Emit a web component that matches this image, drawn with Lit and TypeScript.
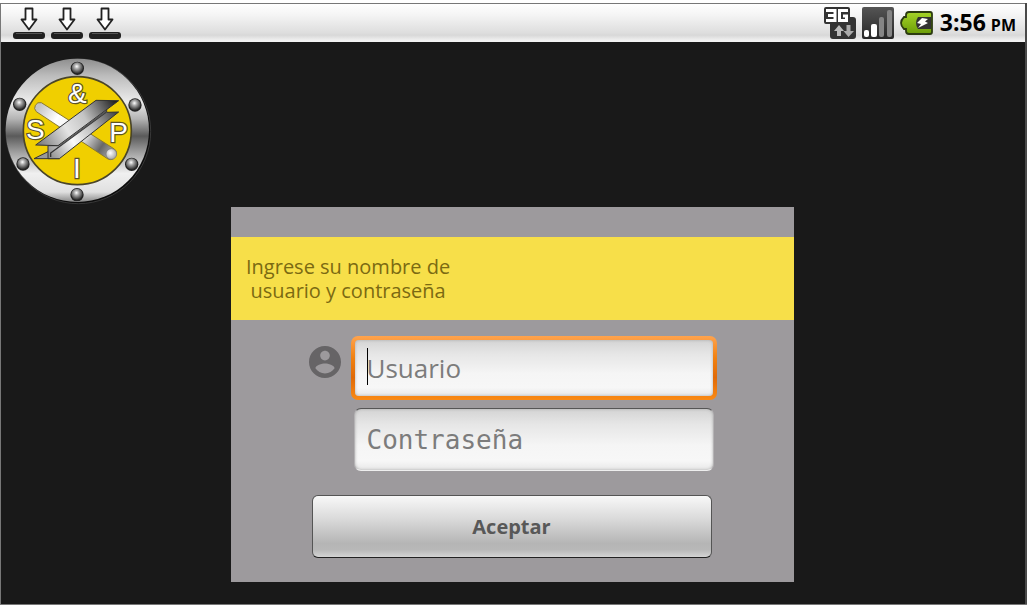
import { LitElement, html, css, svg } from "lit";
import { customElement } from "lit/decorators.js";

const BOLTS = [
  [232, 54],
  [59, 162],
  [405, 164],
  [69, 341],
  [395, 342],
  [231, 433],
];

@customElement("company-logo")
class CompanyLogo extends LitElement {
  static styles = css`
    :host {
      display: block;
      width: 148px;
    }
    svg {
      display: block;
      width: 100%;
    }
    .letter {
      font-family: "Liberation Sans", sans-serif;
      font-size: 84px;
      fill: #fff;
      stroke: #5c5228;
      stroke-width: 7px;
      paint-order: stroke;
      text-anchor: middle;
    }
  `;

  render() {
    return html`
      <svg viewBox="15 20 444 444" role="img" aria-label="S &amp; P I">
        <defs>
          <linearGradient id="ring" x1="0" y1="0" x2="0" y2="1">
            <stop offset="0" stop-color="#8e8e8e" />
            <stop offset="0.12" stop-color="#bcbcbc" />
            <stop offset="0.3" stop-color="#ececec" />
            <stop offset="0.42" stop-color="#b4b4b4" />
            <stop offset="0.54" stop-color="#5a5a5a" />
            <stop offset="0.66" stop-color="#a4a4a4" />
            <stop offset="0.8" stop-color="#f0f0f0" />
            <stop offset="0.93" stop-color="#e0e0e0" />
            <stop offset="1" stop-color="#888" />
          </linearGradient>
          <radialGradient id="bolt" cx="0.45" cy="0.36" r="0.62">
            <stop offset="0" stop-color="#fff" />
            <stop offset="0.35" stop-color="#aaa" />
            <stop offset="1" stop-color="#2c2c2c" />
          </radialGradient>
          <radialGradient id="end" cx="0.4" cy="0.4" r="0.6">
            <stop offset="0" stop-color="#fff" />
            <stop offset="1" stop-color="#aaa" />
          </radialGradient>
          <linearGradient id="rod" gradientUnits="userSpaceOnUse" x1="120" y1="165" x2="330" y2="305">
            <stop offset="0" stop-color="#c4c4c4" />
            <stop offset="0.25" stop-color="#fff" />
            <stop offset="0.65" stop-color="#e4e4e4" />
            <stop offset="0.88" stop-color="#666" />
            <stop offset="1" stop-color="#999" />
          </linearGradient>
          <linearGradient id="face" gradientUnits="userSpaceOnUse" x1="120" y1="280" x2="345" y2="150">
            <stop offset="0" stop-color="#808080" />
            <stop offset="0.35" stop-color="#e4e4e4" />
            <stop offset="0.6" stop-color="#c4c4c4" />
            <stop offset="1" stop-color="#202020" />
          </linearGradient>
          <linearGradient id="side" gradientUnits="userSpaceOnUse" x1="150" y1="325" x2="350" y2="185">
            <stop offset="0" stop-color="#8a8a8a" />
            <stop offset="0.35" stop-color="#fafafa" />
            <stop offset="0.65" stop-color="#bbb" />
            <stop offset="1" stop-color="#404040" />
          </linearGradient>
        </defs>
        <circle cx="235" cy="243" r="217" fill="#0c0c0c" stroke="#4c4c4c" stroke-width="2" />
        <circle cx="232" cy="240" r="215" fill="url(#ring)" />
        <circle cx="232" cy="241" r="162" fill="#f0cf00" stroke="#4a4528" stroke-width="5" />
        ${BOLTS.map(
          ([x, y]) => svg`
            <circle cx=${x} cy=${y} r="20" fill="#222" />
            <circle cx=${x} cy=${y - 1} r="17" fill="url(#bolt)" />`
        )}
        <text class="letter" x="232" y="159">&amp;</text>
        <text class="letter" x="106" y="266">S</text>
        <text class="letter" x="356" y="276">P</text>
        <text class="letter" x="231" y="382">I</text>
        <path d="M124 157 L343 296 A18 18 0 0 1 324 326 L109 184 A16 16 0 0 1 124 157Z"
          fill="url(#rod)" stroke="#8a7a30" stroke-width="3" />
        <circle cx="334" cy="311" r="16" fill="url(#end)" stroke="#777" stroke-width="2" />
        <path d="M102 325 L144 304 L178 325Z"
          fill="#999" stroke="#333" stroke-width="3" stroke-linejoin="round" />
        <path d="M144 286 L174 286 L320 176 L320 186 L356 185 L178 325 L144 325Z"
          fill="url(#side)" stroke="#333" stroke-width="3" stroke-linejoin="round" />
        <path d="M107 284 L288 150 L356 151 L174 286Z"
          fill="url(#face)" stroke="#333" stroke-width="3" stroke-linejoin="round" />
        <path d="M152 320 L152 308 L318 186" fill="none" stroke="#333" stroke-width="4" />
        <path d="M174 288 L320 178 L316 187 L188 282Z" fill="#555" />
      </svg>
    `;
  }
}

@customElement("status-bar")
class StatusBar extends LitElement {
  static styles = css`
    :host {
      display: flex;
      justify-content: space-between;
      align-items: center;
      box-sizing: border-box;
      height: 39px;
      padding: 0 9px 0 12px;
      border-top: 1px solid #777;
      background: linear-gradient(#fff, #f4f4f4 30%, #dedede 75%, #d8d8d8 82%, #f2f2f2 97%);
    }
    svg {
      display: block;
    }
    .group {
      display: flex;
      align-items: center;
      gap: 6px;
    }
    .time {
      display: flex;
      align-items: baseline;
      gap: 5px;
      font: 700 23px/38px "Open Sans", sans-serif;
      color: #000;
      white-space: nowrap;
    }
    .meridiem {
      font-size: 16px;
    }
  `;

  render() {
    return html`
      <div class="group">
        ${[0, 1, 2].map(
          () => html`
            <svg width="32" height="34" viewBox="0 0 32 34" role="img" aria-label="Descarga">
              <path d="M12.5 2.5H19.5V13.5H23.5L16 23.5L8.5 13.5H12.5Z" fill="#fff"
                stroke="#222" stroke-width="1.8" stroke-linejoin="round" />
              <rect x="0" y="26" width="32" height="7" rx="3" fill="#202020" />
              <path d="M3 27.5H29" stroke="#555" />
            </svg>
          `
        )}
      </div>
      <div class="group">
        <svg width="32" height="32" viewBox="0 0 32 32" role="img" aria-label="3G">
          <path d="M2 0H24Q26 0 26 2V10H29Q32 10 32 13V29Q32 32 29 32H9Q6 32 6 29V17H2Q0 17 0 15V2Q0 0 2 0Z" fill="#333" />
          <path d="M2 3.5H11V13.5H2M4 8.5H11" fill="none" stroke="#fff" stroke-width="3" />
          <path d="M24 3.5H15.5V13.5H22.5V9H19" fill="none" stroke="#fff" stroke-width="3" />
          <path d="M15 18L20 24H17V29H13V24H10Z" fill="#bbb" />
          <path d="M24.5 30L30 24H26.5V18H22.5V24H19.5Z" fill="#aaa" />
        </svg>
        <svg width="32" height="32" viewBox="0 0 32 32" role="img" aria-label="Señal">
          <defs>
            <linearGradient id="panel" x1="0" y1="0" x2="0" y2="1">
              <stop offset="0" stop-color="#555" />
              <stop offset="1" stop-color="#262626" />
            </linearGradient>
          </defs>
          <rect width="32" height="32" rx="2" fill="url(#panel)" />
          <rect x="2" y="23" width="5" height="7" rx="2" fill="#fff" />
          <rect x="9" y="17" width="6" height="13" rx="2" fill="#fff" />
          <rect x="17" y="10" width="5" height="20" rx="2" fill="#858585" />
          <rect x="25" y="3" width="5" height="27" rx="2" fill="#858585" />
        </svg>
        <svg width="34" height="24" viewBox="0 0 34 24" role="img" aria-label="Batería">
          <defs>
            <linearGradient id="charge" x1="0" y1="0" x2="0" y2="1">
              <stop offset="0" stop-color="#a5d428" />
              <stop offset="1" stop-color="#6b9c08" />
            </linearGradient>
          </defs>
          <path d="M9 1H30Q32 1 32 3V21Q32 23 30 23H9Q6 23 6 20V18H4Q1 15 1 12Q1 9 4 6H6V4Q6 1 9 1Z"
            fill="url(#charge)" stroke="#2c3b10" stroke-width="1.8" />
          <path d="M18 6H31V18H18Q14 12 18 6Z" fill="#333" />
          <path d="M22 7L28 8L25 10.500L28 12L18 17L21 13L17 12Z" fill="#fff" />
        </svg>
        <div class="time"><span>3:56</span><span class="meridiem">PM</span></div>
      </div>
    `;
  }
}

@customElement("login-card")
class LoginCard extends LitElement {
  static styles = css`
    :host {
      display: block;
      padding: 30px 0 24px;
      background: #9d9a9d;
      font-family: "Open Sans", sans-serif;
    }
    .banner {
      display: flex;
      padding: 18px 15px 17px;
      background: #f7df49;
    }
    .message {
      margin: 0;
      font-size: 20px;
      line-height: 24px;
      text-align: center;
      color: #7b6a12;
    }
    .line {
      display: block;
    }
    .form {
      display: flex;
      flex-direction: column;
      width: 100%;
      max-width: 408px;
      margin: 16px auto 0;
    }
    .row {
      display: grid;
      grid-template-columns: 32px minmax(0, 1fr);
      gap: 10px;
    }
    .avatar {
      display: block;
      margin-top: 10px;
    }
    .fields {
      display: grid;
      gap: 8px;
    }
    .field {
      position: relative;
      border-radius: 7px;
    }
    .focused {
      padding: 4px;
      background: linear-gradient(#ffa34d, #f08010 35%, #e06a08 65%, #fa8a14);
    }
    .plain {
      padding: 0 3px;
    }
    .input {
      display: block;
      box-sizing: border-box;
      width: 100%;
      height: 63px;
      margin: 0;
      padding: 0 12px;
      border: 1px solid #b4b2b4;
      border-top-color: #555;
      border-bottom-color: #eee;
      border-radius: 7px;
      outline: none;
      background: linear-gradient(#d4d4d4, #e6e6e6 25%, #f5f5f5 60%, #f7f7f7 85%, #e8e8e8);
      box-shadow: inset 0 0 3px #aaa;
      font: 26px "Open Sans", sans-serif;
      color: #222;
    }
    .focused .input {
      height: 56px;
      border: 0;
      border-radius: 4px;
      caret-color: transparent;
    }
    .password {
      font-family: "DejaVu Sans Mono", monospace;
    }
    .input::placeholder {
      color: #7c7c7c;
      opacity: 1;
    }
    .caret {
      position: absolute;
      left: 16px;
      top: 12px;
      width: 1px;
      height: 37px;
      background: #000;
    }
    .submit {
      height: 63px;
      margin: 24px 5px 0 3px;
      border: 1px solid #555;
      border-bottom-color: #222;
      border-radius: 6px;
      background: linear-gradient(#f8f8f8, #d8d8d8 40%, #b5b5b5 78%, #b8b8b8 88%, #d4d4d4);
      font: 700 20px "Open Sans", sans-serif;
      color: #585858;
    }
  `;

  render() {
    return html`
      <div class="banner">
        <p class="message">
          <span class="line">Ingrese su nombre de</span>
          <span class="line">usuario y contraseña</span>
        </p>
      </div>
      <form class="form" @submit=${(e: Event) => e.preventDefault()}>
        <div class="row">
          <svg class="avatar" width="32" height="32" viewBox="2 2 20 20" aria-hidden="true">
            <path fill="#666466" d="M12 2C6.48 2 2 6.48 2 12s4.48 10 10 10 10-4.48 10-10S17.52 2 12 2zm0 3c1.66 0 3 1.34 3 3s-1.34 3-3 3-3-1.34-3-3 1.34-3 3-3zm0 14.2c-2.5 0-4.71-1.28-6-3.22.03-1.99 4-3.08 6-3.08 1.99 0 5.97 1.09 6 3.08-1.29 1.94-3.5 3.22-6 3.22z" />
          </svg>
          <div class="fields">
            <div class="field focused">
              <input class="input" type="text" placeholder="Usuario" aria-label="Usuario" />
              <span class="caret"></span>
            </div>
            <div class="field plain">
              <input class="input password" type="password" placeholder="Contraseña" aria-label="Contraseña" />
            </div>
          </div>
        </div>
        <button class="submit" type="submit">Aceptar</button>
      </form>
    `;
  }
}

@customElement("app-root")
class AppRoot extends LitElement {
  static styles = css`
    :host {
      display: flex;
      flex-direction: column;
      box-sizing: border-box;
      min-height: 100vh;
      padding-top: 3px;
      background: #fff;
    }
    .screen {
      flex: 1;
      display: flex;
      flex-direction: column;
      border: solid #777;
      border-width: 0 0 1px 1px;
      margin-bottom: 1px;
      box-shadow: inset -2px 0 #4a4a4a;
      padding-right: 2px;
      background: #191919;
    }
    .content {
      padding: 15px 5px 22px 4px;
    }
    .center {
      display: grid;
      grid-template-columns: minmax(0, 563px);
      justify-content: center;
      margin-top: 2px;
    }
  `;

  render() {
    return html`
      <div class="screen">
        <status-bar></status-bar>
        <main class="content">
          <company-logo></company-logo>
          <div class="center"><login-card></login-card></div>
        </main>
      </div>
    `;
  }
}
